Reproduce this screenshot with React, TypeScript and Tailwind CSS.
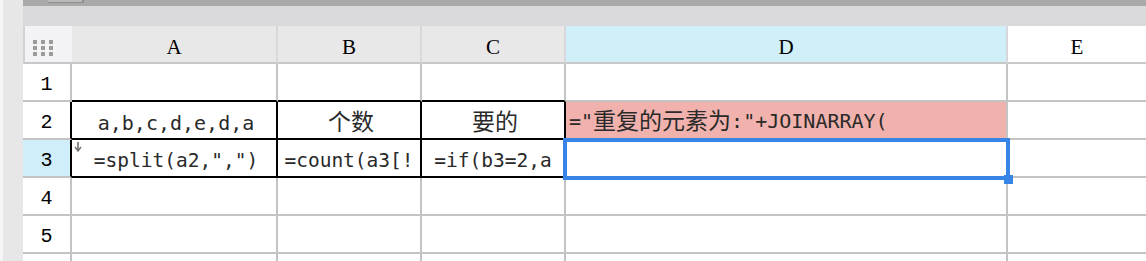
import React from 'react';

const COLS = [
    { key: 'A', w: 'w-[206px]' },
    { key: 'B', w: 'w-[144px]' },
    { key: 'C', w: 'w-[144px]' },
    { key: 'D', w: 'w-[442px]' },
    { key: 'E', w: 'w-[140px]' },
];

const mono = "font-['DejaVu_Sans_Mono','Noto_Sans_CJK_SC',monospace]";
const digits = "font-['Liberation_Mono',monospace]";
const letters = "font-['Liberation_Serif',serif]";

interface CellProps {
    w: string;
    right?: string;
    bottom?: string;
    bg?: string;
    children?: React.ReactNode;
    className?: string;
}

const Cell: React.FC<CellProps> = ({ w, right = 'border-r-[#c3c3c3]', bottom = 'border-b-[#c3c3c3]', bg = 'bg-white', children, className = '' }) => (
    <div className={`${w} h-full shrink-0 border-r-2 border-b-2 overflow-hidden ${right} ${bottom} ${bg} ${className}`}>
        {children}
    </div>
);

const RowHead: React.FC<{ n?: number; active?: boolean; black?: boolean }> = ({ n, active, black }) => (
    <Cell
        w="w-[49px]"
        bg={active ? 'bg-[#d0eef9]' : 'bg-white'}
        right={black ? 'border-r-black' : 'border-r-[#c3c3c3]'}
        className={`flex items-center justify-center pt-[6px] text-[20px] text-black ${digits}`}
    >
        {n}
    </Cell>
);

const DownArrow = () => (
    <svg width="8" height="10" viewBox="0 0 8 10" className="absolute left-[2px] top-[2px]">
        <path d="M4 0 V8" stroke="#707070" strokeWidth="1.6" />
        <path d="M1 5 L4 9 L7 5" stroke="#707070" strokeWidth="1.4" fill="none" />
    </svg>
);

export default function App() {
    return (
        <div className="w-[1146px] h-[261px] overflow-hidden flex bg-white">
            {/* left strip */}
            <div className="w-[23px] h-full shrink-0 flex">
                <div className="w-[3px] h-full bg-[#f5f5f5]" />
                <div className="flex-1 h-full bg-[#e7e7e7]" />
            </div>

            <div className="flex-1 flex flex-col min-w-0">
                {/* top bars */}
                <div className="h-[6px] bg-[#a9a9aa] shrink-0 pl-[25px]">
                    <div className="w-[36px] h-[3px] bg-[#b9b9ba] border-r-2 border-b border-[#8e8e8e]" />
                </div>
                <div className="h-[20px] bg-[#dadadc] shrink-0" />

                {/* grid */}
                <div className="relative flex flex-col">
                    {/* header */}
                    <div className="flex h-[38px]">
                        <div className="w-[49px] h-full shrink-0 border-l-2 border-l-[#d2d2d4] border-b-2 border-b-[#c8c8c8] bg-[#f3f3f5] pl-[8px] pt-[14px]">
                            <div className="grid grid-cols-3 gap-x-[4px] gap-y-[2px] w-fit">
                                {Array.from({ length: 9 }).map((_, i) => (
                                    <div key={i} className="w-[4px] h-[4px] bg-[#9b9b9b]" />
                                ))}
                            </div>
                        </div>
                        {COLS.map((c) => (
                            <Cell
                                key={c.key}
                                w={c.w}
                                right="border-r-[#d8d8dc]"
                                bottom="border-b-[#c8c8c8]"
                                bg={c.key === 'D' ? 'bg-[#d0eff9]' : c.key === 'E' ? 'bg-white' : 'bg-[#e8e8e8]'}
                                className={`flex items-center justify-center pt-[7px] text-[21px] text-black ${letters}`}
                            >
                                {c.key}
                            </Cell>
                        ))}
                    </div>

                    {/* row 1 */}
                    <div className="flex h-[38px]">
                        <RowHead n={1} />
                        <Cell w="w-[206px]" bottom="border-b-black" />
                        <Cell w="w-[144px]" bottom="border-b-black" />
                        <Cell w="w-[144px]" bottom="border-b-black" />
                        <Cell w="w-[442px]" />
                        <Cell w="w-[140px]" />
                    </div>

                    {/* row 2 */}
                    <div className={`flex h-[38px] text-[#2a2a2a] ${mono}`}>
                        <RowHead n={2} black />
                        <Cell w="w-[206px]" right="border-r-black" bottom="border-b-black" className="flex items-end justify-center pb-[2px] pl-[4px] text-[20px] leading-[26px]">
                            a,b,c,d,e,d,a
                        </Cell>
                        <Cell w="w-[144px]" right="border-r-black" bottom="border-b-black" className="flex items-end justify-center pb-[3px] pl-[4px] text-[23px] leading-[26px]">
                            个数
                        </Cell>
                        <Cell w="w-[144px]" right="border-r-black" bottom="border-b-black" className="flex items-end justify-center pb-[3px] pl-[4px] text-[23px] leading-[26px]">
                            要的
                        </Cell>
                        <Cell w="w-[442px]" bg="bg-[#f1b2ad]" className="flex items-end pl-[3px] pb-[5px] text-[20px] leading-[24px] whitespace-nowrap">
                            ="<span className="text-[23px]">重复的元素为</span>:"+JOINARRAY(
                        </Cell>
                        <Cell w="w-[140px]" />
                    </div>

                    {/* row 3 */}
                    <div className={`flex h-[38px] text-[#2a2a2a] ${mono}`}>
                        <RowHead n={3} active black />
                        <Cell w="w-[206px]" right="border-r-black" bottom="border-b-black" className="relative text-center text-[19.5px] leading-[24px] pt-[9px] pl-[4px]">
                            <DownArrow />
                            =split(a2,",")
                        </Cell>
                        <Cell w="w-[144px]" right="border-r-black" bottom="border-b-black" className="text-center text-[19.5px] leading-[24px] pt-[9px] break-all px-[4px]">
                            =count(a3[!a3=#])
                        </Cell>
                        <Cell w="w-[144px]" right="border-r-black" bottom="border-b-black" className="text-center text-[19.5px] leading-[24px] pt-[9px] break-all px-[4px]">
                            =if(b3=2,a3)
                        </Cell>
                        <Cell w="w-[442px]" />
                        <Cell w="w-[140px]" />
                    </div>

                    {/* rows 4-6 */}
                    {[4, 5, 6].map((n) => (
                        <div key={n} className="flex h-[38px]">
                            <RowHead n={n < 6 ? n : undefined} />
                            <Cell w="w-[206px]" />
                            <Cell w="w-[144px]" />
                            <Cell w="w-[144px]" />
                            <Cell w="w-[442px]" />
                            <Cell w="w-[140px]" />
                        </div>
                    ))}

                    {/* selection D3 */}
                    <div className="absolute left-[540px] top-[112px] w-[447px] h-[42px] border-4 border-[#3584e6] pointer-events-none" />
                    <div className="absolute left-[981px] top-[149px] w-[9px] h-[9px] bg-[#3584e6]" />
                </div>
            </div>
        </div>
    );
}
